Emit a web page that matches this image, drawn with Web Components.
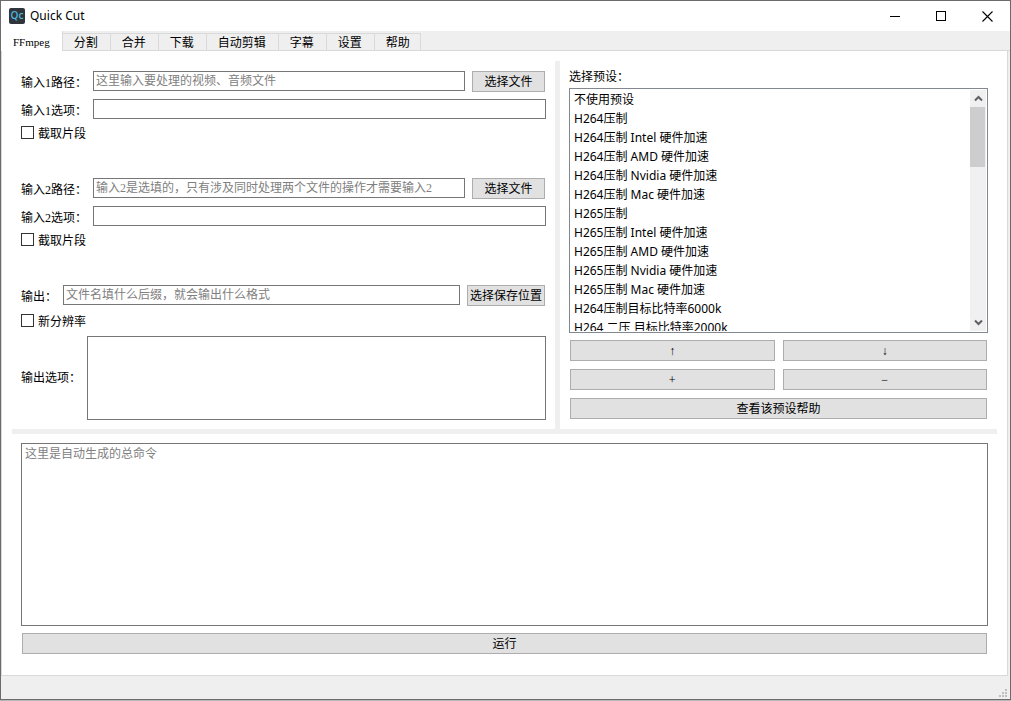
<!DOCTYPE html>
<html lang="zh-CN">
<head>
<meta charset="utf-8">
<title>Quick Cut</title>
<style>
body {
  margin: 0;
  background: #b8b8b8;
  color: #000;
  font: 12px/16px "Liberation Serif", "Noto Sans CJK SC", sans-serif;
  --font-ui: "Noto Sans", "Noto Sans CJK SC", sans-serif;
  --color-face: #efefef;
  --color-line: #d9d9d9;
  --color-field: #767676;
}
</style>
</head>
<body>
<quick-cut></quick-cut>

<script>
class TitleBar extends HTMLElement {
  constructor() {
    super();
    this.attachShadow({ mode: "open" }).innerHTML = `<style>
:host {
  display: flex;
  align-items: center;
  block-size: 30px;
  padding-inline-start: 8px;
  background: #fff;
  font-family: var(--font-ui);
}
.logo {
  display: block;
  inline-size: 16px;
  block-size: 16px;
  margin-inline-end: 5px;
}
.title {
  flex: 1;
}
button {
  display: grid;
  place-items: center;
  inline-size: 46px;
  block-size: 30px;
  padding: 0;
  border: 0;
  background: none;
}
button:hover {
  background: #e5e5e5;
}
</style>
<svg class="logo" viewBox="0 0 16 16" aria-hidden="true">
  <rect width="16" height="16" rx="2" fill="#30353c" />
  <text x="8" y="11" text-anchor="middle" font-family="Open Sans, sans-serif" font-size="10" font-weight="600" fill="#4fb8dc">Qc</text>
</svg>
<span class="title"><slot></slot></span>
<button type="button" aria-label="最小化"><svg width="11" height="11" shape-rendering="crispEdges"><path d="M0 5.5H10" stroke="#000" /></svg></button>
<button type="button" aria-label="最大化"><svg width="11" height="11" shape-rendering="crispEdges"><rect x=".5" y=".5" width="9" height="9" fill="none" stroke="#000" /></svg></button>
<button type="button" aria-label="关闭"><svg width="11" height="11"><path d="M.5 .5 10.5 10.5M10.5 .5 .5 10.5" stroke="#000" stroke-width="1.1" /></svg></button>`;
  }
}

class TabBar extends HTMLElement {
  constructor() {
    super();
    const shadowRoot = this.attachShadow({ mode: "open" });
    shadowRoot.innerHTML = `<style>
:host {
  display: flex;
  align-items: flex-end;
  block-size: 20px;
  background: linear-gradient(var(--color-line), var(--color-line)) bottom / 100% 1px no-repeat var(--color-face);
}
button {
  block-size: 18px;
  padding: 1px 12px 0 11px;
  border: solid var(--color-line);
  border-width: 1px 1px 1px 0;
  background: var(--color-face);
  color: inherit;
  font: inherit;
  line-height: 16px;
}
button:last-child {
  padding-inline: 11px 10px;
}
button[aria-selected="true"] {
  block-size: 20px;
  border-width: 0 1px 0 0;
  background: #fff;
}
button.latin {
  padding-inline: 12px;
  font-size: 11px;
}
</style>`;
    const names = this.getAttribute("tabs").split(" ");
    names.forEach((name, index) => {
      const button = document.createElement("button");
      button.type = "button";
      button.setAttribute("role", "tab");
      button.setAttribute("aria-selected", index === 0);
      button.classList.toggle("latin", /^\w+$/.test(name));
      button.textContent = name;
      button.addEventListener("click", () => this.select(button));
      shadowRoot.append(button);
    });
  }

  connectedCallback() {
    this.setAttribute("role", "tablist");
  }

  select(selected) {
    for (const button of this.shadowRoot.querySelectorAll("button")) {
      button.setAttribute("aria-selected", button === selected);
    }
  }
}

class PushButton extends HTMLElement {
  constructor() {
    super();
    this.attachShadow({ mode: "open" }).innerHTML = `<style>
:host {
  display: block;
}
button {
  display: block;
  box-sizing: border-box;
  inline-size: 100%;
  min-inline-size: 73px;
  block-size: 21px;
  padding: 2px 2px 0;
  border: 1px solid #adadad;
  background: #e1e1e1;
  color: inherit;
  font: inherit;
  line-height: 17px;
  white-space: nowrap;
}
button:hover {
  border-color: #0078d7;
  background: #e5f1fb;
}
</style>
<button type="button"><slot></slot></button>`;
  }
}

class TextField extends HTMLElement {
  constructor() {
    super();
    this.attachShadow({ mode: "open" }).innerHTML = `<style>
:host {
  display: flex;
  align-items: flex-start;
}
label {
  margin-inline-end: 6px;
  line-height: 24px;
  block-size: 20px;
  white-space: nowrap;
}
input {
  flex: 1;
  box-sizing: border-box;
  min-inline-size: 0;
  block-size: 20px;
  padding: 0 2px;
  border: 1px solid var(--color-field);
  border-radius: 0;
  background: #fff;
  font: inherit;
}
input::placeholder {
  color: #808080;
}
input:focus {
  outline: 0;
  border-color: #0078d7;
}
::slotted(*) {
  margin-inline: 7px 1px;
}
</style>
<label for="field"></label>
<input id="field" type="text">
<slot></slot>`;
  }

  connectedCallback() {
    this.shadowRoot.querySelector("label").textContent = this.getAttribute("label");
    this.shadowRoot.querySelector("input").placeholder = this.getAttribute("placeholder") || "";
  }
}

class TextBox extends HTMLElement {
  constructor() {
    super();
    this.attachShadow({ mode: "open" }).innerHTML = `<style>
:host {
  display: flex;
  align-items: center;
}
label {
  margin-inline-end: 6px;
  white-space: nowrap;
}
label:empty {
  display: none;
}
textarea {
  flex: 1;
  align-self: stretch;
  box-sizing: border-box;
  min-inline-size: 0;
  min-block-size: 84px;
  padding: 2px 3px;
  border: 1px solid var(--color-field);
  background: #fff;
  font: inherit;
  resize: none;
}
textarea::placeholder {
  color: #808080;
}
textarea:focus {
  outline: 0;
  border-color: #0078d7;
}
</style>
<label for="box"></label>
<textarea id="box"></textarea>`;
  }

  connectedCallback() {
    const textarea = this.shadowRoot.querySelector("textarea");
    const label = this.getAttribute("label") || "";
    this.shadowRoot.querySelector("label").textContent = label;
    textarea.placeholder = this.getAttribute("placeholder") || "";
    if (!label) {
      textarea.setAttribute("aria-label", textarea.placeholder);
    }
  }
}

class CheckOption extends HTMLElement {
  constructor() {
    super();
    this.attachShadow({ mode: "open" }).innerHTML = `<style>
:host {
  display: flex;
}
label {
  display: flex;
  align-items: flex-start;
  gap: 4px;
  block-size: 14px;
  line-height: 16px;
}
input {
  appearance: none;
  display: grid;
  place-items: center;
  box-sizing: border-box;
  inline-size: 13px;
  block-size: 13px;
  margin: 0;
  border: 1px solid #333;
  background: #fff;
}
input:checked::before {
  content: "";
  inline-size: 7px;
  block-size: 3px;
  border: solid #333;
  border-width: 0 0 1px 1px;
  transform: rotate(-45deg);
}
</style>
<label><input type="checkbox"><slot></slot></label>`;
  }
}

class MediaSource extends HTMLElement {
  constructor() {
    super();
    const number = this.getAttribute("number");
    const placeholder = this.getAttribute("placeholder");
    this.attachShadow({ mode: "open" }).innerHTML = `<style>
:host {
  display: flex;
  flex-direction: column;
  gap: 7px;
}
</style>
<text-field label="输入${number}路径：" placeholder="${placeholder}"><push-button>选择文件</push-button></text-field>
<text-field label="输入${number}选项："></text-field>
<check-option>截取片段</check-option>`;
  }
}

const presets = [
  "不使用预设",
  "H264压制",
  "H264压制 Intel 硬件加速",
  "H264压制 AMD 硬件加速",
  "H264压制 Nvidia 硬件加速",
  "H264压制 Mac 硬件加速",
  "H265压制",
  "H265压制 Intel 硬件加速",
  "H265压制 AMD 硬件加速",
  "H265压制 Nvidia 硬件加速",
  "H265压制 Mac 硬件加速",
  "H264压制目标比特率6000k",
  "H264 二压 目标比特率2000k",
];

class PresetList extends HTMLElement {
  constructor() {
    super();
    this.attachShadow({ mode: "open" }).innerHTML = `<style>
:host {
  display: flex;
  flex-direction: column;
  gap: 3px;
}
.list {
  flex: 1;
  display: flex;
  padding: 1px;
  border: 1px solid #828790;
  background: #fff;
}
select {
  flex: 1;
  min-inline-size: 0;
  block-size: auto;
  padding: 0;
  border: 0;
  border-radius: 0;
  outline: 0;
  background: #fff;
  font: 12px/19px var(--font-ui);
  scrollbar-width: none;
}
option {
  block-size: 19px;
  min-block-size: 19px;
  padding: 0 3px;
  color: #000;
  line-height: 19px;
}
.scroll {
  display: flex;
  flex-direction: column;
  inline-size: 16px;
  background: #f0f0f0;
}
.scroll button {
  display: grid;
  place-items: center;
  block-size: 17px;
  padding: 0;
  border: 0;
  background: none;
}
.track {
  flex: 1;
}
.thumb {
  inline-size: 15px;
  block-size: 60px;
  background: #cdcdcd;
}
</style>
<label for="presets">选择预设：</label>
<div class="list">
  <select id="presets" size="12">${presets.map((name) => `<option>${name}</option>`).join("")}</select>
  <div class="scroll">
    <button class="up" type="button" tabindex="-1" aria-label="向上滚动"><svg width="9" height="7"><path d="M1 5.5 4.5 2 8 5.5" fill="none" stroke="#606060" stroke-width="2" /></svg></button>
    <div class="track"><div class="thumb"></div></div>
    <button class="down" type="button" tabindex="-1" aria-label="向下滚动"><svg width="9" height="7"><path d="M1 1.5 4.5 5 8 1.5" fill="none" stroke="#606060" stroke-width="2" /></svg></button>
  </div>
</div>`;
  }

  connectedCallback() {
    const { shadowRoot } = this;
    const select = shadowRoot.querySelector("select");
    shadowRoot.querySelector(".up").addEventListener("click", () => select.scrollBy(0, -19));
    shadowRoot.querySelector(".down").addEventListener("click", () => select.scrollBy(0, 19));
  }
}

class QuickCut extends HTMLElement {
  constructor() {
    super();
    this.attachShadow({ mode: "open" }).innerHTML = `<style>
:host {
  display: flex;
  flex-direction: column;
  box-sizing: border-box;
  min-block-size: calc(100vh - 1px);
  border: 1px solid #6b6b6b;
  background: var(--color-face);
}
main {
  flex: 1;
  display: flex;
  flex-direction: column;
  margin-inline-end: 2px;
  padding: 10px;
  border: solid var(--color-line);
  border-width: 0 1px 1px;
  background: #fff;
}
.top {
  display: grid;
  grid-template-columns: minmax(0, 543fr) 5px minmax(0, 437fr);
}
.divider {
  background: var(--color-face);
}
hr {
  inline-size: 100%;
  block-size: 5px;
  margin: 0;
  border: 0;
  background: var(--color-face);
}
.sources {
  display: flex;
  flex-direction: column;
  gap: 38px;
  padding: 10px 9px 9px;
}
.output {
  flex: 1;
  display: flex;
  flex-direction: column;
  gap: 8px;
}
.output text-box {
  flex: 1;
}
.presets {
  display: flex;
  flex-direction: column;
  gap: 7px;
  padding: 8px 9px 10px;
}
preset-list {
  flex: 1;
}
.actions {
  display: grid;
  grid-template-columns: 1fr 1fr;
  gap: 8px;
  margin-inline: 1px;
}
.wide {
  grid-column: 1 / -1;
}
.command {
  flex: 1;
  display: flex;
  flex-direction: column;
  gap: 7px;
  padding: 9px 9px 11px;
}
.command text-box {
  flex: 1;
}
.command push-button {
  margin-inline: 1px;
}
footer {
  display: flex;
  align-items: flex-end;
  justify-content: flex-end;
  block-size: 23px;
}
footer svg {
  display: block;
  margin: 2px 3px;
}
</style>
<title-bar>Quick Cut</title-bar>
<tab-bar tabs="FFmpeg 分割 合并 下载 自动剪辑 字幕 设置 帮助"></tab-bar>
<main>
  <div class="top">
    <section class="sources">
      <media-source number="1" placeholder="这里输入要处理的视频、音频文件"></media-source>
      <media-source number="2" placeholder="输入2是选填的，只有涉及同时处理两个文件的操作才需要输入2"></media-source>
      <div class="output">
        <text-field label="输出：" placeholder="文件名填什么后缀，就会输出什么格式"><push-button>选择保存位置</push-button></text-field>
        <check-option>新分辨率</check-option>
        <text-box label="输出选项："></text-box>
      </div>
    </section>
    <div class="divider"></div>
    <section class="presets">
      <preset-list></preset-list>
      <div class="actions">
        <push-button>↑</push-button>
        <push-button>↓</push-button>
        <push-button>+</push-button>
        <push-button>−</push-button>
        <push-button class="wide">查看该预设帮助</push-button>
      </div>
    </section>
  </div>
  <hr>
  <section class="command">
    <text-box placeholder="这里是自动生成的总命令"></text-box>
    <push-button>运行</push-button>
  </section>
</main>
<footer>
  <svg width="8" height="8" fill="#bfbfbf" aria-hidden="true"><path d="M6 0h2v2h-2zM3 3h2v2h-2zM6 3h2v2h-2zM0 6h2v2h-2zM3 6h2v2h-2zM6 6h2v2h-2z" /></svg>
</footer>`;
  }
}

customElements.define("title-bar", TitleBar);
customElements.define("tab-bar", TabBar);
customElements.define("push-button", PushButton);
customElements.define("text-field", TextField);
customElements.define("text-box", TextBox);
customElements.define("check-option", CheckOption);
customElements.define("media-source", MediaSource);
customElements.define("preset-list", PresetList);
customElements.define("quick-cut", QuickCut);
</script>
</body>
</html>
